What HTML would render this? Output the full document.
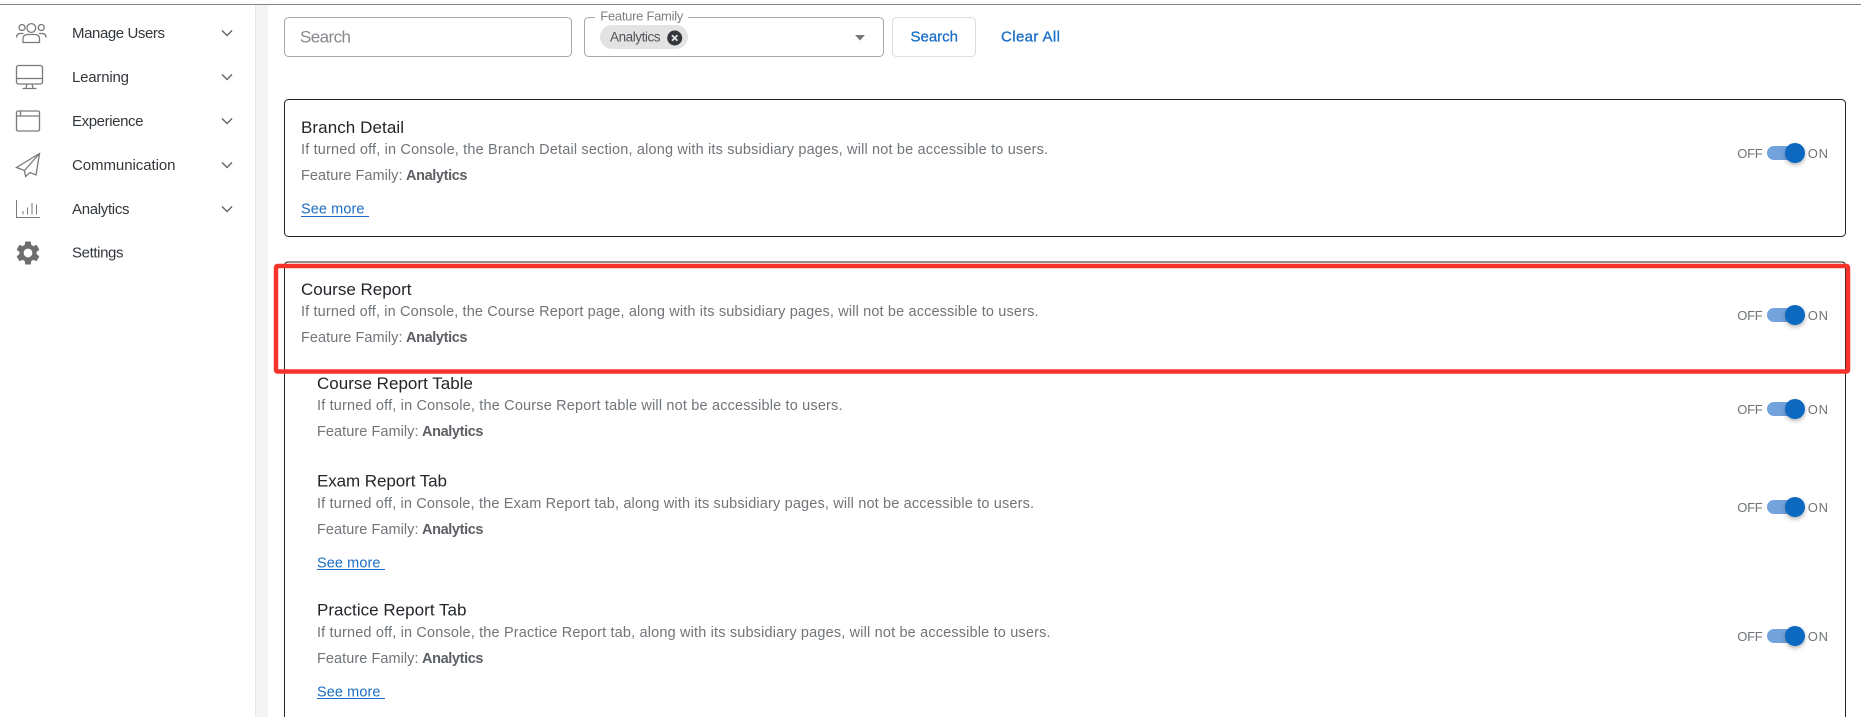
<!DOCTYPE html>
<html lang="en"><head><meta charset="utf-8"><title>Feature Settings</title>
<style>
html,body{margin:0;padding:0;background:#fff;width:1861px;height:717px;overflow:hidden}
svg{display:block}
text{font-family:"Liberation Sans",sans-serif;white-space:pre}
.nav{font-size:15px;fill:#33383d}
.t{font-size:17px;fill:#22262a}
.d{font-size:14.5px;fill:#70757a}
.f{font-size:14.5px;fill:#70757a}
.b{font-size:14.5px;fill:#5c6065;font-weight:bold}
.l{font-size:14.5px;fill:#1a6cc4}
.sw{font-size:13px;fill:#6f7478}
.act{font-size:15px;fill:#1a6fc8;stroke:#1a6fc8;stroke-width:.3px}
.ic{fill:none;stroke:#7a7a7a;stroke-width:1.3}
.ch{fill:none;stroke:#6a6a6a;stroke-width:1.5}
</style></head>
<body>
<svg width="1861" height="717" viewBox="0 0 1861 717" xmlns="http://www.w3.org/2000/svg">
<defs>
<filter id="s" x="-50%" y="-50%" width="200%" height="220%"><feDropShadow dx="0" dy="2" stdDeviation="2" flood-color="#000" flood-opacity=".3"/></filter>
<g id="tg">
<rect x="1767" y="-7" width="33" height="14" rx="7" fill="#72a3dc"/>
<circle cx="1795" cy="0" r="10" fill="#0f67c0" filter="url(#s)"/>
<text class="sw" x="1737.3" y="5" textLength="25.4">OFF</text>
<text class="sw" x="1807.7" y="5" textLength="20.3">ON</text>
</g>
</defs>
<rect width="1861" height="717" fill="#fff"/>
<rect x="255" y="4" width="13" height="713" fill="#f4f4f4"/>
<rect x="255" y="4" width="1" height="713" fill="#e6e6e6"/>
<rect x="0" y="4" width="1861" height="1" fill="#858585"/>

<!-- sidebar icons -->
<g class="ic">
<circle cx="31.3" cy="28" r="4.4"/><circle cx="22" cy="27.5" r="3"/><circle cx="41.3" cy="27.5" r="3"/>
<path d="M23 42.5V39q0-4.5 4.5-4.5h7.5q4.5 0 4.5 4.5v3.5z"/>
<path d="M16.5 37.5q0-4 4-4h3M46 37.5q0-4-4-4h-3"/>
<rect x="16.5" y="65.5" width="26" height="18.5" rx="2"/><path d="M16.5 78.5h26M27 84l-1 4M32 84l1 4M22.5 88.5h14"/>
<rect x="16.5" y="111" width="23" height="20" rx="1.5"/><path d="M16.5 116h23M20.5 111v5"/>
<path d="M39.5 153.5L16.5 167.5L24.5 170.5L25.5 176.5L30 172.5L36 175ZM39.5 153.5L24.5 170.5"/>
<path d="M16.5 200v17.5h23.5" stroke-width="1"/><path d="M23 211v3.5M27.5 207.5v7M32 203v11.5M36.5 204.5v10" stroke-width="1"/>
</g>
<path transform="translate(13.6 238.6) scale(1.2)" fill="#6e6e6e" d="M19.14,12.94c0.04-0.3,0.06-0.61,0.06-0.94c0-0.32-0.02-0.64-0.07-0.94l2.03-1.58c0.18-0.14,0.23-0.41,0.12-0.61l-1.92-3.32c-0.12-0.22-0.37-0.29-0.59-0.22l-2.39,0.96c-0.5-0.38-1.03-0.7-1.62-0.94L14.4,2.81c-0.04-0.24-0.24-0.41-0.48-0.41h-3.84c-0.24,0-0.43,0.17-0.47,0.41L9.25,5.35C8.66,5.59,8.12,5.92,7.63,6.29L5.24,5.33c-0.22-0.08-0.47,0-0.59,0.22L2.74,8.87C2.62,9.08,2.66,9.34,2.86,9.48l2.03,1.58C4.84,11.36,4.8,11.69,4.8,12s0.02,0.64,0.07,0.94l-2.03,1.58c-0.18,0.14-0.23,0.41-0.12,0.61l1.92,3.32c0.12,0.22,0.37,0.29,0.59,0.22l2.39-0.96c0.5,0.38,1.03,0.7,1.62,0.94l0.36,2.54c0.05,0.24,0.24,0.41,0.48,0.41h3.84c0.24,0,0.44-0.17,0.47-0.41l0.36-2.54c0.59-0.24,1.13-0.56,1.62-0.94l2.39,0.96c0.22,0.08,0.47,0,0.59-0.22l1.92-3.32c0.12-0.22,0.07-0.47-0.12-0.61L19.14,12.94z M12,15.6c-1.98,0-3.6-1.62-3.6-3.6s1.62-3.6,3.6-3.6s3.6,1.62,3.6,3.6S13.98,15.6,12,15.6z"/>

<!-- sidebar text -->
<text class="nav" x="72" y="38" textLength="93">Manage Users</text>
<text class="nav" x="72" y="82" textLength="57">Learning</text>
<text class="nav" x="72" y="126" textLength="71.5">Experience</text>
<text class="nav" x="72" y="170" textLength="103.5">Communication</text>
<text class="nav" x="72" y="214" textLength="57.5">Analytics</text>
<text class="nav" x="72" y="257.5" textLength="51.5">Settings</text>
<path class="ch" d="M222 30.5l5 5 5-5M222 74.5l5 5 5-5M222 118.5l5 5 5-5M222 162.5l5 5 5-5M222 206.5l5 5 5-5"/>

<!-- filters -->
<rect x="284.5" y="17.5" width="287" height="39" rx="4" fill="#fff" stroke="#a8a8a8"/>
<text x="300" y="42.5" font-size="17" fill="#85898d" textLength="51">Search</text>
<rect x="584.5" y="17.5" width="299" height="39" rx="4" fill="#fff" stroke="#a8a8a8"/>
<rect x="595" y="15" width="93" height="5" fill="#fff"/>
<text x="600.3" y="20.7" font-size="13" fill="#7c7f83" textLength="83">Feature Family</text>
<rect x="600" y="25" width="88" height="24" rx="12" fill="#e3e3e3"/>
<text x="610" y="41.5" font-size="13.5" fill="#4f5357" textLength="50.5">Analytics</text>
<circle cx="674.7" cy="38" r="7.5" fill="#33363a"/>
<path d="M672 35.3l5.4 5.4M677.4 35.3l-5.4 5.4" stroke="#e3e3e3" stroke-width="1.8" fill="none"/>
<path d="M855 35h10l-5 5.5z" fill="#777"/>
<rect x="892.5" y="17.5" width="83" height="39" rx="4" fill="#fff" stroke="#dedede"/>
<text class="act" x="910.5" y="41.7" textLength="47.5">Search</text>
<text class="act" x="1001" y="41.7" textLength="59">Clear All</text>

<!-- card 1 -->
<rect x="284.5" y="99.5" width="1561" height="137" rx="4" fill="#fff" stroke="#222"/>
<text class="t" x="301" y="133" textLength="103">Branch Detail</text>
<text class="d" x="301" y="154" textLength="747">If turned off, in Console, the Branch Detail section, along with its subsidiary pages, will not be accessible to users.</text>
<text class="f" x="301" y="180" textLength="101.5">Feature Family:</text>
<text class="b" x="406" y="180" textLength="61.5">Analytics</text>
<text class="l" x="301" y="213.5" textLength="63.5">See more</text>
<path d="M301 216.5h68" stroke="#1a6cc4"/>
<use href="#tg" y="153"/>

<!-- card 2 -->
<path d="M284.5 724V266q0-4 4-4H1841.5q4 0 4 4V724" fill="#fff" stroke="#222"/>
<rect x="276" y="266" width="1572" height="105.5" rx="1.5" fill="none" stroke="#f5332b" stroke-width="4.5"/>
<text class="t" x="301" y="295" textLength="110.5">Course Report</text>
<text class="d" x="301" y="316" textLength="737.5">If turned off, in Console, the Course Report page, along with its subsidiary pages, will not be accessible to users.</text>
<text class="f" x="301" y="342" textLength="101.5">Feature Family:</text>
<text class="b" x="406" y="342" textLength="61.5">Analytics</text>
<use href="#tg" y="315"/>

<text class="t" x="317" y="389" textLength="156">Course Report Table</text>
<text class="d" x="317" y="410" textLength="525.5">If turned off, in Console, the Course Report table will not be accessible to users.</text>
<text class="f" x="317" y="436" textLength="101.5">Feature Family:</text>
<text class="b" x="422" y="436" textLength="61.5">Analytics</text>
<use href="#tg" y="409"/>

<text class="t" x="317" y="486.7" textLength="130">Exam Report Tab</text>
<text class="d" x="317" y="508" textLength="717">If turned off, in Console, the Exam Report tab, along with its subsidiary pages, will not be accessible to users.</text>
<text class="f" x="317" y="534" textLength="101.5">Feature Family:</text>
<text class="b" x="422" y="534" textLength="61.5">Analytics</text>
<text class="l" x="317" y="567.5" textLength="63.5">See more</text>
<path d="M317 569.5h68" stroke="#1a6cc4"/>
<use href="#tg" y="507"/>

<text class="t" x="317" y="615.7" textLength="149.5">Practice Report Tab</text>
<text class="d" x="317" y="637" textLength="733.5">If turned off, in Console, the Practice Report tab, along with its subsidiary pages, will not be accessible to users.</text>
<text class="f" x="317" y="663" textLength="101.5">Feature Family:</text>
<text class="b" x="422" y="663" textLength="61.5">Analytics</text>
<text class="l" x="317" y="696.5" textLength="63.5">See more</text>
<path d="M317 698.5h68" stroke="#1a6cc4"/>
<use href="#tg" y="636"/>
</svg>
</body></html>
